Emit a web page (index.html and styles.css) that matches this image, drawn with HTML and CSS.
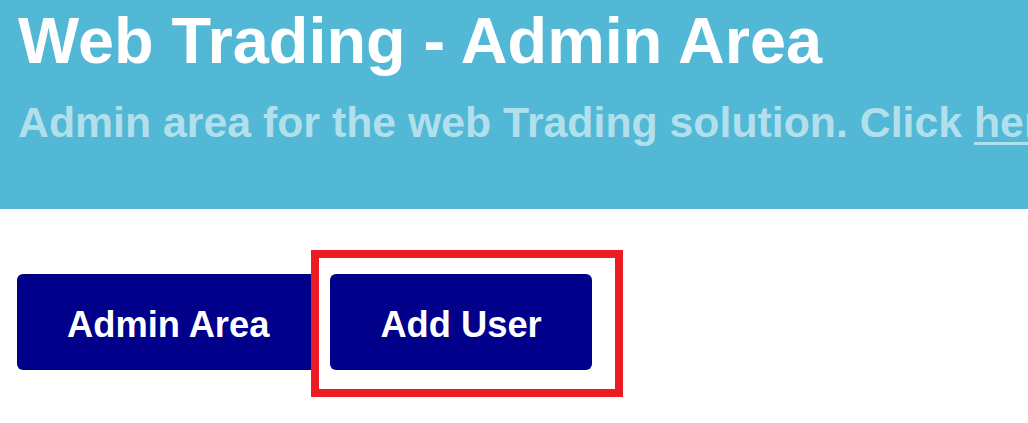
FILE: index.html
```html
<!DOCTYPE html>
<html lang="en">
<head>
<meta charset="utf-8">
<title>Web Trading - Admin Area</title>
<link rel="stylesheet" href="styles.css">
</head>
<body>
  <header class="hero">
    <h1 class="hero-title">Web Trading - Admin Area</h1>
    <p class="hero-sub">Admin area for the web Trading solution. Click <a class="hero-link" href="#">here</a> for more information.</p>
  </header>
  <main class="content">
    <nav class="btn-row">
      <a class="btn" href="#">Admin Area</a>
      <span class="highlight-wrap">
        <a class="btn" href="#">Add User</a>
        <span class="highlight" aria-hidden="true"></span>
      </span>
    </nav>
  </main>
</body>
</html>
```
FILE: styles.css
```css
html, body {
  margin: 0;
  padding: 0;
  background: #ffffff;
  overflow: hidden;
}

body {
  font-family: "Liberation Sans", Arial, Helvetica, sans-serif;
  width: 1028px;
  height: 423px;
}

.hero {
  background: #52b8d6;
  height: 209px;
  box-sizing: border-box;
  padding: 9px 0 0 18px;
  white-space: nowrap;
  overflow: hidden;
}

.hero-title {
  margin: 0;
  font-size: 64.8px;
  line-height: 64px;
  font-weight: 700;
  color: #ffffff;
}

.hero-sub {
  margin: 28px 0 0 0;
  font-size: 42.8px;
  line-height: 42.5px;
  font-weight: 700;
  color: #b1e0ec;
}

.hero-link {
  color: #b1e0ec;
  text-decoration: underline;
  text-decoration-thickness: 3px;
  text-underline-offset: 5px;
}

.content {
  padding: 65px 0 0 17px;
}

.btn-row {
  display: flex;
  gap: 11px;
  align-items: flex-start;
}

.btn {
  display: block;
  box-sizing: border-box;
  height: 96px;
  padding: 33px 50px 0 50px;
  background: #00008b;
  color: #ffffff;
  border-radius: 6px;
  font-size: 36.3px;
  line-height: 36px;
  font-weight: 700;
  text-decoration: none;
  white-space: nowrap;
}

.highlight-wrap {
  position: relative;
  display: block;
}

.highlight {
  position: absolute;
  top: -24px;
  left: -19px;
  right: -31px;
  bottom: -27px;
  border: 8px solid #ed1c24;
  pointer-events: none;
}
```
